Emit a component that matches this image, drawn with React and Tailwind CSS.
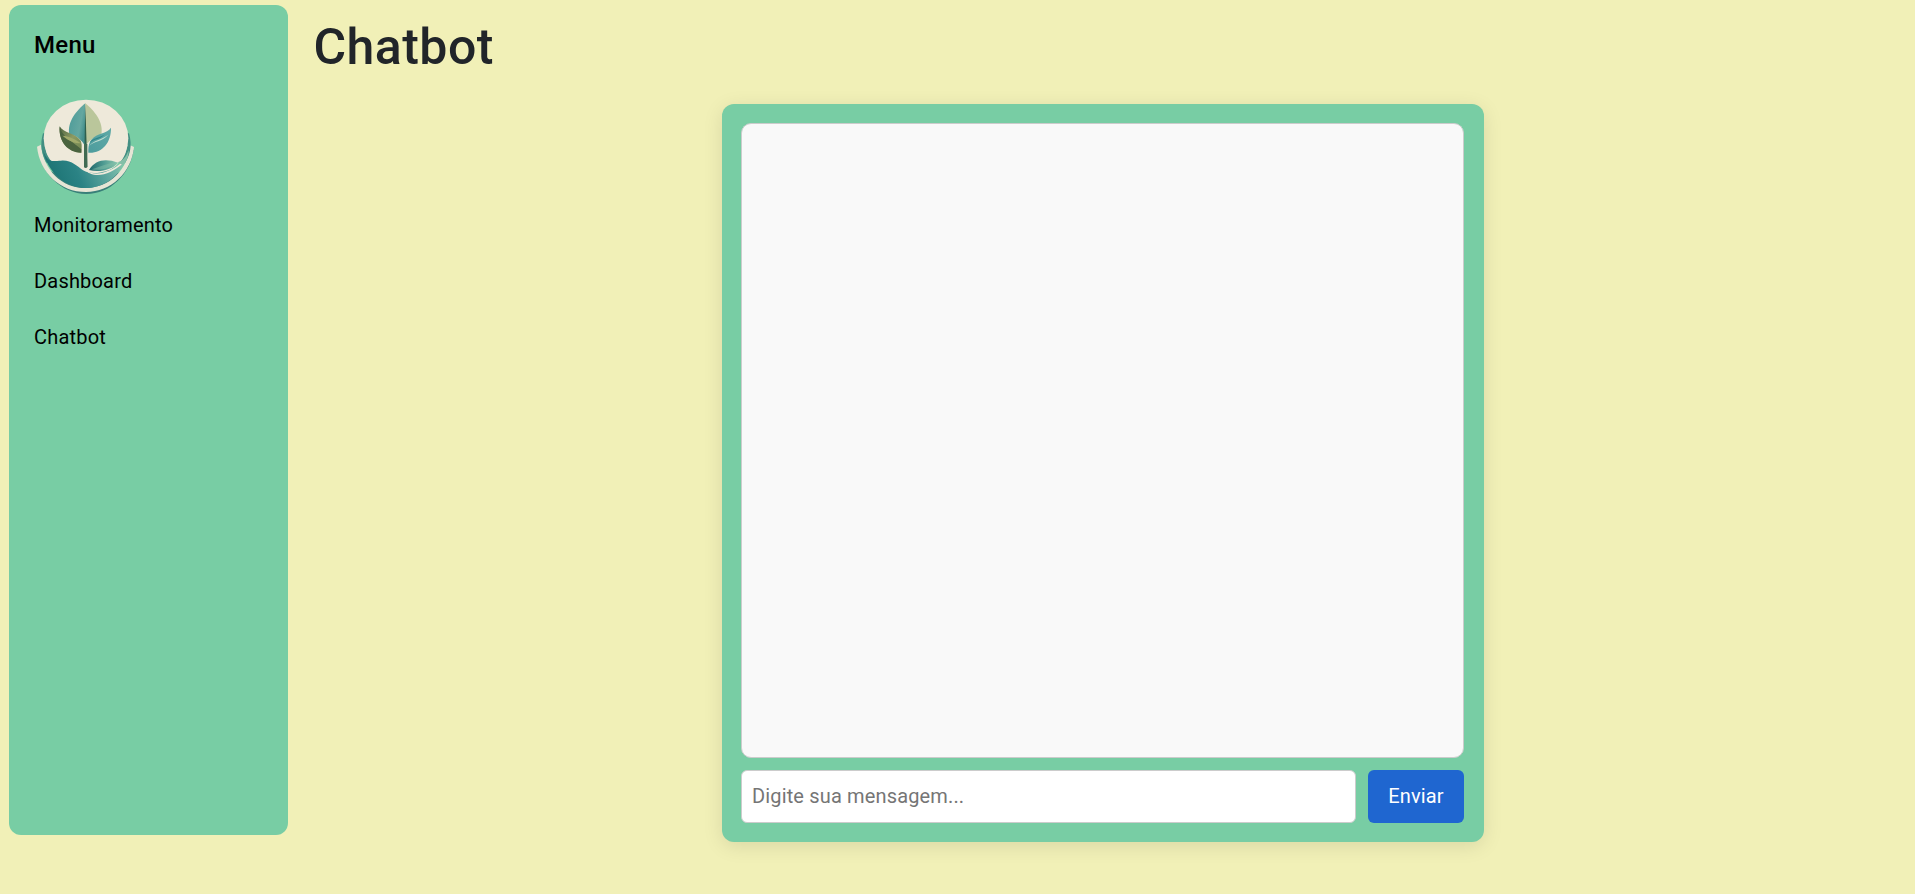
function Logo() {
  return (
    <svg className="block size-[100px]" viewBox="27 21 300 300" role="img" aria-label="Logo">
      <defs>
        <linearGradient id="water" x1="0" x2="1" y1="0.3" y2="0.1">
          <stop offset="0" stopColor="#1c7373" />
          <stop offset="0.35" stopColor="#2b8385" />
          <stop offset="0.7" stopColor="#5fa89f" />
          <stop offset="1" stopColor="#93cdb1" />
        </linearGradient>
        <linearGradient id="leafTop" x1="0" x2="1" y1="0" y2="0.5">
          <stop offset="0" stopColor="#4a9a99" />
          <stop offset="0.75" stopColor="#64a7a0" />
          <stop offset="1" stopColor="#458f8c" />
        </linearGradient>
        <linearGradient id="leafLeft" x1="0" x2="1" y1="0" y2="1">
          <stop offset="0" stopColor="#4e6440" />
          <stop offset="0.5" stopColor="#8c9a62" />
          <stop offset="1" stopColor="#6c824f" />
        </linearGradient>
        <linearGradient id="leafRight" x1="1" x2="0" y1="0" y2="1">
          <stop offset="0" stopColor="#5fa9a6" />
          <stop offset="0.5" stopColor="#57a3a2" />
          <stop offset="1" stopColor="#4c9c9d" />
        </linearGradient>
        <linearGradient id="wave" x1="0" x2="1" y1="0" y2="0">
          <stop offset="0" stopColor="#20676a" />
          <stop offset="0.5" stopColor="#4f9b92" />
          <stop offset="1" stopColor="#90cab0" />
        </linearGradient>
      </defs>
      <path d="M40 178C48 250 110 312 184 312C256 312 316 252 326 180L316 176L300 240L180 290L70 240Z" fill="#397f79" />
      <path d="M36 170L48 164C56 240 110 294 182 294C254 294 308 240 316 166L327 171C320 248 258 306 183 306C106 306 44 248 36 170Z" fill="#e6e5d5" />
      <path d="M54 130C44 164 50 194 64 218L300 218C316 194 322 164 312 130Z" fill="#438f83" />
      <ellipse cx="183" cy="145" rx="127" ry="116" fill="#eee9da" />
      <path d="M60 164C62 190 70 204 84 218L284 218C296 204 304 190 307 164L240 245L120 245Z" fill="#eee9da" />
      <path d="M54 180C62 204 72 214 84 213C94 213 100 212 108 212C138 209 156 228 174 241C194 253 222 250 244 243C264 237 278 222 298 218C276 264 232 294 182 294C122 294 66 246 54 180Z" fill="url(#water)" />
      <path d="M192 240C212 208 242 205 280 218C262 238 226 249 192 240Z" fill="url(#wave)" />
      <path d="M200 238C230 228 248 220 270 218C256 232 230 244 200 238Z" fill="#80bca6" opacity="0.55" />
      <path d="M176 236C206 262 250 250 290 218L294 220C252 258 204 268 176 236Z" fill="#eee9da" />
      <path d="M278 217C294 212 304 200 311 180C311 200 305 214 294 226Z" fill="#84bfa7" />
      <path d="M181 40C156 60 126 96 133 132C155 137 171 151 181 169Z" fill="url(#leafTop)" />
      <path d="M181 40C208 62 237 97 229 134C208 139 192 151 181 169Z" fill="#bac69b" />
      <path d="M104 109C115 130 149 127 166 151C172 161 170 175 169 188C128 187 100 154 104 109Z" fill="url(#leafLeft)" />
      <path d="M104 110C112 140 139 151 169 178L169 188C128 187 101 155 104 110Z" fill="#4a633f" />
      <path d="M112 137C135 139 153 149 168 160C149 160 131 153 112 137Z" fill="#a1aa6a" />
      <path d="M258 113C246 132 216 128 199 149C190 162 190 173 190 188C230 191 259 159 258 113Z" fill="url(#leafRight)" />
      <path d="M192 168C207 150 227 151 250 134C229 157 210 151 192 168Z" fill="#c0ddd0" />
      <path d="M194 158C203 144 224 144 240 133C224 150 208 147 194 158Z" fill="#2f858a" />
      <path d="M181 42L184 138L187 231Q182 236 177 231L179 138Z" fill="#2e5f4d" />
      <path d="M177 162V231Q182 236 187 231V162Z" fill="#416b52" />
    </svg>
  );
}

const links = ["Monitoramento", "Dashboard", "Chatbot"];

export default function App() {
  return (
    <div className="flex h-screen w-full items-start overflow-hidden bg-[#f1f0b7] pl-[9px] pt-[5px] font-[Roboto,sans-serif] text-black">
      <aside className="h-[830px] w-[279px] shrink-0 rounded-[12px] bg-[#78cda4] px-[25px] pt-[25px]">
        <h2 className="text-[24px] font-medium leading-[30px] tracking-[0.3px]">Menu</h2>
        <div className="mt-[37px]">
          <Logo />
        </div>
        <nav className="flex flex-col">
          {links.map((label) => (
            <a key={label} href="#" className="flex h-14 items-center text-[20px] tracking-[0.19px]">
              {label}
            </a>
          ))}
        </nav>
      </aside>
      <main className="min-w-0 flex-1 pl-[25px] pt-[12px]">
        <h1 className="pl-[0.5px] text-[50px] font-medium leading-[60px] tracking-[0.45px] text-[#212529]">Chatbot</h1>
        <section className="ml-[409px] mt-[27px] flex h-[738px] w-[762px] flex-col gap-3 rounded-[12px] bg-[#78cda4] py-[19px] pl-[19px] pr-[18px] shadow-[0_4px_20px_rgba(0,0,0,0.1)]">
          <div className="w-[723px] flex-1 rounded-[10px] border border-[#ccc] bg-[#f9f9f9]" />
          <form className="flex h-[53px] w-[723px] gap-3" onSubmit={(e) => e.preventDefault()}>
            <input
              type="text"
              placeholder="Digite sua mensagem..."
              className="min-w-0 flex-1 rounded-[6px] border border-[#ccc] bg-white px-[10px] pb-[2px] text-[20px] tracking-[0.15px] outline-none placeholder:text-[#757575]"
            />
            <button type="submit" className="w-24 rounded-[6px] bg-[#1f66d0] pb-[2px] text-[20px] tracking-[0.15px] text-white">
              Enviar
            </button>
          </form>
        </section>
      </main>
    </div>
  );
}
